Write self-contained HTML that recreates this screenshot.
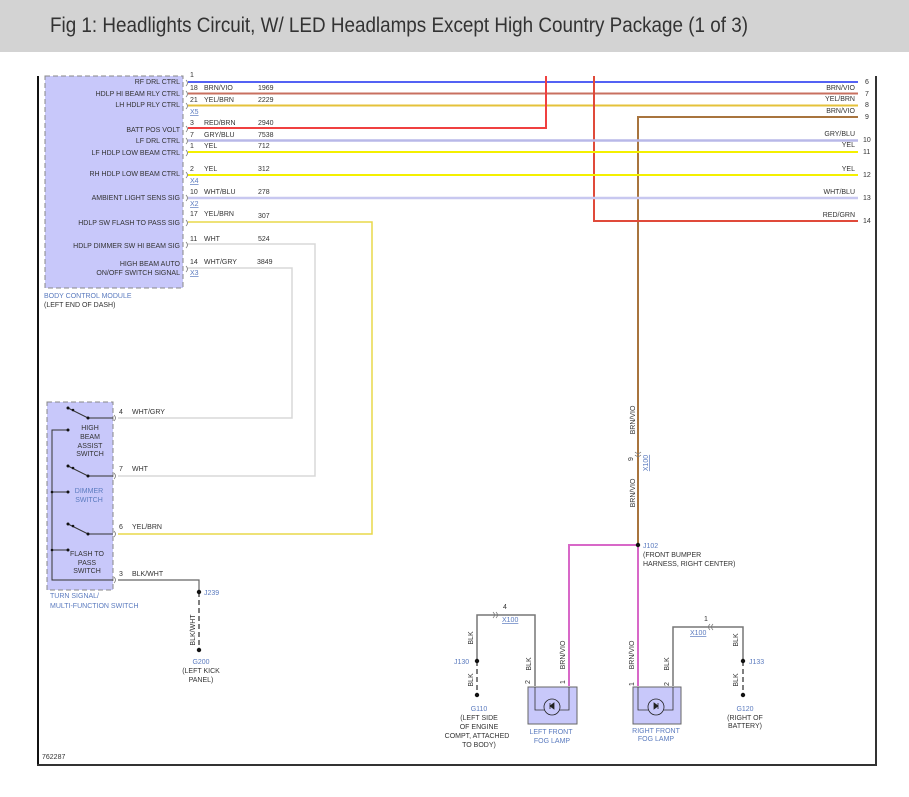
<!DOCTYPE html>
<html><head><meta charset="utf-8"><style>
html,body{margin:0;padding:0;background:#fff;width:909px;height:797px;overflow:hidden}
svg{display:block}
text{font-family:"Liberation Sans",Arial,sans-serif;font-size:7px;fill:#333}
.b{fill:#5b7bbf}
.u{fill:#5b7bbf;text-decoration:underline}
.r{text-anchor:end}
.m{text-anchor:middle}
</style></head><body>
<svg width="909" height="797" viewBox="0 0 909 797" xmlns="http://www.w3.org/2000/svg">
<rect x="0" y="0" width="909" height="52" fill="#d3d3d3"/>
<text x="50" y="32" style="font-size:21px;fill:#333" textLength="698" lengthAdjust="spacingAndGlyphs">Fig 1: Headlights Circuit, W/ LED Headlamps Except High Country Package (1 of 3)</text>
<!-- frame -->
<line x1="38" y1="76" x2="38" y2="765" stroke="#111" stroke-width="2"/>
<line x1="37" y1="765" x2="877" y2="765" stroke="#333" stroke-width="2"/>
<line x1="876" y1="76" x2="876" y2="766" stroke="#333" stroke-width="2"/>
<text x="42" y="759">762287</text>
<!-- BCM -->
<rect x="45" y="76" width="138" height="212" fill="#c8c8fa" stroke="#888" stroke-dasharray="5,3"/>
<g class="r">
<text x="180" y="84" class="r">RF DRL CTRL</text>
<text x="180" y="96" class="r">HDLP HI BEAM RLY CTRL</text>
<text x="180" y="107" class="r">LH HDLP RLY CTRL</text>
<text x="180" y="132" class="r">BATT POS VOLT</text>
<text x="180" y="143" class="r">LF DRL CTRL</text>
<text x="180" y="155" class="r">LF HDLP LOW BEAM CTRL</text>
<text x="180" y="176" class="r">RH HDLP LOW BEAM CTRL</text>
<text x="180" y="200" class="r">AMBIENT LIGHT SENS SIG</text>
<text x="180" y="225" class="r">HDLP SW FLASH TO PASS SIG</text>
<text x="180" y="248" class="r">HDLP DIMMER SW HI BEAM SIG</text>
<text x="180" y="266" class="r">HIGH BEAM AUTO</text>
<text x="180" y="275" class="r">ON/OFF SWITCH SIGNAL</text>
</g>
<text x="44" y="298" class="b">BODY CONTROL MODULE</text>
<text x="44" y="307">(LEFT END OF DASH)</text>
<!-- wires -->
<g fill="none">
<line x1="188" y1="82" x2="858" y2="82" stroke="#1b2ef0" stroke-width="1.5"/>
<line x1="188" y1="93.5" x2="858" y2="93.5" stroke="#c87060" stroke-width="2"/>
<line x1="188" y1="105.5" x2="858" y2="105.5" stroke="#e4c23a" stroke-width="2"/>
<polyline points="858,117 638,117 638,545" stroke="#a8743e" stroke-width="2"/>
<polyline points="188,128 546,128 546,76" stroke="#f04040" stroke-width="2"/>
<polyline points="594,76 594,221 858,221" stroke="#e04a3a" stroke-width="2"/>
<line x1="188" y1="140.5" x2="858" y2="140.5" stroke="#b8b8e8" stroke-width="2.5"/>
<line x1="188" y1="152" x2="858" y2="152" stroke="#f4f000" stroke-width="2"/>
<line x1="188" y1="175" x2="858" y2="175" stroke="#f4f000" stroke-width="2"/>
<line x1="188" y1="198" x2="858" y2="198" stroke="#c8c8f0" stroke-width="2.5"/>
<polyline points="188,222 372,222 372,534 118,534" stroke="#e8d84a" stroke-width="1.5"/>
<polyline points="188,244 315,244 315,476 118,476" stroke="#d8d8d8" stroke-width="1.5"/>
<polyline points="188,268 292,268 292,418 118,418" stroke="#d8d8d8" stroke-width="1.5"/>
<polyline points="118,580 199,580 199,592" stroke="#666" stroke-width="1.2"/>
<line x1="199" y1="592" x2="199" y2="650" stroke="#555" stroke-width="1.5" stroke-dasharray="5,3"/>
<polyline points="638,545 638,686" stroke="#d868c8" stroke-width="2"/>
<polyline points="638,545 569,545 569,686" stroke="#d868c8" stroke-width="2"/>
<polyline points="477,661 477,615 535,615 535,686" stroke="#777" stroke-width="1.5"/>
<line x1="477" y1="661" x2="477" y2="695" stroke="#555" stroke-width="1.5" stroke-dasharray="5,3"/>
<polyline points="673,686 673,627 743,627 743,661" stroke="#777" stroke-width="1.5"/>
<line x1="743" y1="661" x2="743" y2="695" stroke="#555" stroke-width="1.5" stroke-dasharray="5,3"/>
</g>
<!-- connector brackets -->
<g fill="none" stroke="#777" stroke-width="0.8">
<path d="M186,80 q3,3 0,6 M186,91 q3,3 0,6 M186,103 q3,3 0,6 M186,126 q3,3 0,6 M186,138 q3,3 0,6 M186,150 q3,3 0,6 M186,172 q3,3 0,6 M186,195 q3,3 0,6 M186,220 q3,3 0,6 M186,242 q3,3 0,6 M186,266 q3,3 0,6"/>
<path d="M114,415 q3,3 0,6 M114,473 q3,3 0,6 M114,531 q3,3 0,6 M114,577 q3,3 0,6"/>
<path d="M635,452 q3,3 6,0 M635,455 q3,3 6,0"/>
<path d="M493,612 q3,3 0,6 M496,612 q3,3 0,6 M710,624 q-3,3 0,6 M713,624 q-3,3 0,6"/>
</g>
<g>
<text x="190" y="77">1</text>
<text x="190" y="90">18</text><text x="204" y="90">BRN/VIO</text><text x="258" y="90">1969</text>
<text x="190" y="102">21</text><text x="204" y="102">YEL/BRN</text><text x="258" y="102">2229</text>
<text x="190" y="114" class="u">X5</text>
<text x="190" y="125">3</text><text x="204" y="125">RED/BRN</text><text x="258" y="125">2940</text>
<text x="190" y="137">7</text><text x="204" y="137">GRY/BLU</text><text x="258" y="137">7538</text>
<text x="190" y="148">1</text><text x="204" y="148">YEL</text><text x="258" y="148">712</text>
<text x="190" y="171">2</text><text x="204" y="171">YEL</text><text x="258" y="171">312</text>
<text x="190" y="183" class="u">X4</text>
<text x="190" y="194">10</text><text x="204" y="194">WHT/BLU</text><text x="258" y="194">278</text>
<text x="190" y="206" class="u">X2</text>
<text x="190" y="216">17</text><text x="204" y="216">YEL/BRN</text><text x="258" y="218">307</text>
<text x="190" y="241">11</text><text x="204" y="241">WHT</text><text x="258" y="241">524</text>
<text x="190" y="264">14</text><text x="204" y="264">WHT/GRY</text><text x="257" y="264">3849</text>
<text x="190" y="275" class="u">X3</text>
</g>
<g>
<text x="855" y="90" class="r">BRN/VIO</text>
<text x="855" y="101" class="r">YEL/BRN</text>
<text x="855" y="113" class="r">BRN/VIO</text>
<text x="855" y="136" class="r">GRY/BLU</text>
<text x="855" y="147" class="r">YEL</text>
<text x="855" y="171" class="r">YEL</text>
<text x="855" y="194" class="r">WHT/BLU</text>
<text x="855" y="217" class="r">RED/GRN</text>
<text x="865" y="84">6</text><text x="865" y="96">7</text><text x="865" y="107">8</text><text x="865" y="119">9</text>
<text x="863" y="142">10</text><text x="863" y="154">11</text><text x="863" y="177">12</text><text x="863" y="200">13</text><text x="863" y="223">14</text>
</g>
<!-- switch -->
<rect x="47" y="402" width="66" height="188" fill="#c8c8fa" stroke="#888" stroke-dasharray="5,3"/>
<g stroke="#333" stroke-width="1" fill="none">
<polyline points="68,408 88,418 113,418"/>
<polyline points="68,466 88,476 113,476"/>
<polyline points="68,524 88,534 113,534"/>
<polyline points="68,430 52,430 52,580 113,580"/>
<line x1="52" y1="492" x2="68" y2="492"/><line x1="52" y1="550" x2="68" y2="550"/>
</g>
<g fill="#111">
<circle cx="68" cy="408" r="1.5"/><circle cx="73" cy="410" r="1.3"/><circle cx="88" cy="418" r="1.5"/>
<circle cx="68" cy="466" r="1.5"/><circle cx="73" cy="468" r="1.3"/><circle cx="88" cy="476" r="1.5"/>
<circle cx="68" cy="524" r="1.5"/><circle cx="73" cy="526" r="1.3"/><circle cx="88" cy="534" r="1.5"/>
<circle cx="68" cy="430" r="1.5"/><circle cx="68" cy="492" r="1.5"/><circle cx="68" cy="550" r="1.5"/>
<circle cx="52" cy="492" r="1.3"/><circle cx="52" cy="550" r="1.3"/>
<circle cx="199" cy="592" r="2.2"/><circle cx="199" cy="650" r="2.2"/>
<circle cx="638" cy="545" r="2.2"/>
<circle cx="477" cy="661" r="2.2"/><circle cx="477" cy="695" r="2.2"/>
<circle cx="743" cy="661" r="2.2"/><circle cx="743" cy="695" r="2.2"/>
</g>
<text x="90" y="430" class="m">HIGH</text>
<text x="90" y="439" class="m">BEAM</text>
<text x="90" y="448" class="m">ASSIST</text>
<text x="90" y="456" class="m">SWITCH</text>
<text x="89" y="493" class="m b">DIMMER</text>
<text x="89" y="502" class="m b">SWITCH</text>
<text x="87" y="556" class="m">FLASH TO</text>
<text x="87" y="565" class="m">PASS</text>
<text x="87" y="573" class="m">SWITCH</text>
<text x="50" y="598" class="b">TURN SIGNAL/</text>
<text x="50" y="608" class="b">MULTI-FUNCTION SWITCH</text>
<text x="119" y="414">4</text><text x="132" y="414">WHT/GRY</text>
<text x="119" y="471">7</text><text x="132" y="471">WHT</text>
<text x="119" y="529">6</text><text x="132" y="529">YEL/BRN</text>
<text x="119" y="576">3</text><text x="132" y="576">BLK/WHT</text>
<text x="204" y="595" class="b">J239</text>
<text transform="translate(195,630) rotate(-90)" class="m">BLK/WHT</text>
<text x="201" y="664" class="m b">G200</text>
<text x="201" y="673" class="m">(LEFT KICK</text>
<text x="201" y="682" class="m">PANEL)</text>
<!-- right vertical labels -->
<text transform="translate(635,420) rotate(-90)" class="m">BRN/VIO</text>
<text transform="translate(633,459) rotate(-90)" class="m">9</text>
<text transform="translate(648,463) rotate(-90)" class="m u">X100</text>
<text transform="translate(635,493) rotate(-90)" class="m">BRN/VIO</text>
<text x="643" y="548" class="b">J102</text>
<text x="643" y="557">(FRONT BUMPER</text>
<text x="643" y="566">HARNESS, RIGHT CENTER)</text>
<!-- left ground / lamp -->
<text x="503" y="609">4</text>
<text x="502" y="622" class="u">X100</text>
<text transform="translate(473,638) rotate(-90)" class="m">BLK</text>
<text x="454" y="664" class="b">J130</text>
<text transform="translate(473,680) rotate(-90)" class="m">BLK</text>
<text x="479" y="711" class="m b">G110</text>
<text x="479" y="720" class="m">(LEFT SIDE</text>
<text x="479" y="729" class="m">OF ENGINE</text>
<text x="477" y="738" class="m">COMPT, ATTACHED</text>
<text x="479" y="747" class="m">TO BODY)</text>
<text transform="translate(531,664) rotate(-90)" class="m">BLK</text>
<text transform="translate(565,655) rotate(-90)" class="m">BRN/VIO</text>
<text transform="translate(530,682) rotate(-90)" class="m">2</text>
<text transform="translate(565,682) rotate(-90)" class="m">1</text>
<rect x="528" y="687" width="49" height="37" fill="#c8c8fa" stroke="#666"/>
<polyline points="535,687 535,710 569,710 569,687" fill="none" stroke="#333" stroke-width="0.8"/>
<circle cx="552" cy="707" r="8" fill="#c8c8fa" stroke="#222" stroke-width="0.8"/>
<path d="M554,703 l-4,3 l4,3z M550,703 v6" fill="#222" stroke="#222" stroke-width="0.8"/>
<text x="551" y="734" class="m b">LEFT FRONT</text>
<text x="552" y="743" class="m b">FOG LAMP</text>
<!-- right lamp -->
<text transform="translate(634,655) rotate(-90)" class="m">BRN/VIO</text>
<text transform="translate(669,664) rotate(-90)" class="m">BLK</text>
<text transform="translate(634,684) rotate(-90)" class="m">1</text>
<text transform="translate(669,684) rotate(-90)" class="m">2</text>
<rect x="633" y="687" width="48" height="37" fill="#c8c8fa" stroke="#666"/>
<polyline points="638,687 638,710 673,710 673,687" fill="none" stroke="#333" stroke-width="0.8"/>
<circle cx="656" cy="707" r="8" fill="#c8c8fa" stroke="#222" stroke-width="0.8"/>
<path d="M654,703 l4,3 l-4,3z M658,703 v6" fill="#222" stroke="#222" stroke-width="0.8"/>
<text x="656" y="733" class="m b">RIGHT FRONT</text>
<text x="656" y="741" class="m b">FOG LAMP</text>
<text x="704" y="621">1</text>
<text x="690" y="635" class="u">X100</text>
<text transform="translate(738,640) rotate(-90)" class="m">BLK</text>
<text x="749" y="664" class="b">J133</text>
<text transform="translate(738,680) rotate(-90)" class="m">BLK</text>
<text x="745" y="711" class="m b">G120</text>
<text x="745" y="720" class="m">(RIGHT OF</text>
<text x="745" y="728" class="m">BATTERY)</text>
</svg>
</body></html>
